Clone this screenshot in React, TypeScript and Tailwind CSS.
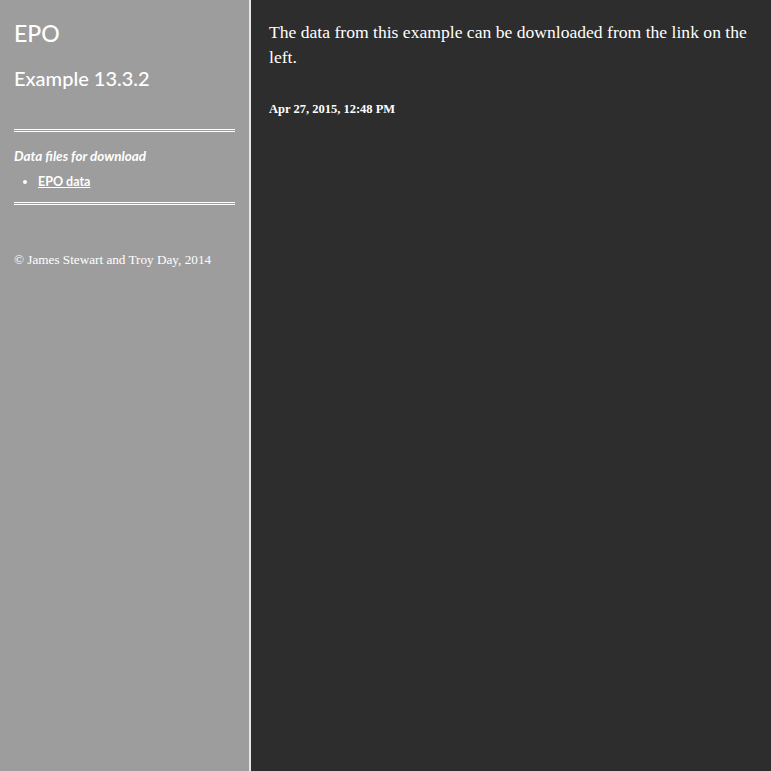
export default function App() {
  return (
    <div className="flex min-h-[771px] w-full bg-[#2d2d2d]">
      <aside className="w-[249px] shrink-0 bg-[#9d9d9d] px-[14px] pt-[19px] text-white font-['Lato',sans-serif]">
        <h1 className="text-[23px] font-medium leading-[28px]">EPO</h1>
        <h2 className="mt-[19px] text-[20px] font-medium leading-[24px]">Example 13.3.2</h2>
        <div className="mt-[39px] border-t-[3px] border-double border-white" />
        <p className="mt-[16px] text-[13.5px] italic font-bold leading-[16px]">Data files for download</p>
        <ul className="mt-[9px] list-disc pl-[24px] text-[12.5px] font-bold leading-[18px]">
          <li>
            <a href="#" className="underline">EPO data</a>
          </li>
        </ul>
        <div className="mt-[11px] border-t-[3px] border-double border-white" />
        <p className="mt-[46px] text-[13.2px] leading-[18px] font-['Liberation_Serif',serif]">
          © James Stewart and Troy Day, 2014
        </p>
      </aside>
      <div className="w-[2px] shrink-0 bg-[#e6e6e6]" />
      <main className="flex-1 pl-[18px] pr-[16px] pt-[20px] text-white font-['Liberation_Serif',serif]">
        <p className="text-[17.6px] leading-[25px]">
          The data from this example can be downloaded from the link on the left.
        </p>
        <p className="mt-[31px] text-[12.5px] font-bold leading-[16px]">Apr 27, 2015, 12:48 PM</p>
      </main>
    </div>
  );
}
